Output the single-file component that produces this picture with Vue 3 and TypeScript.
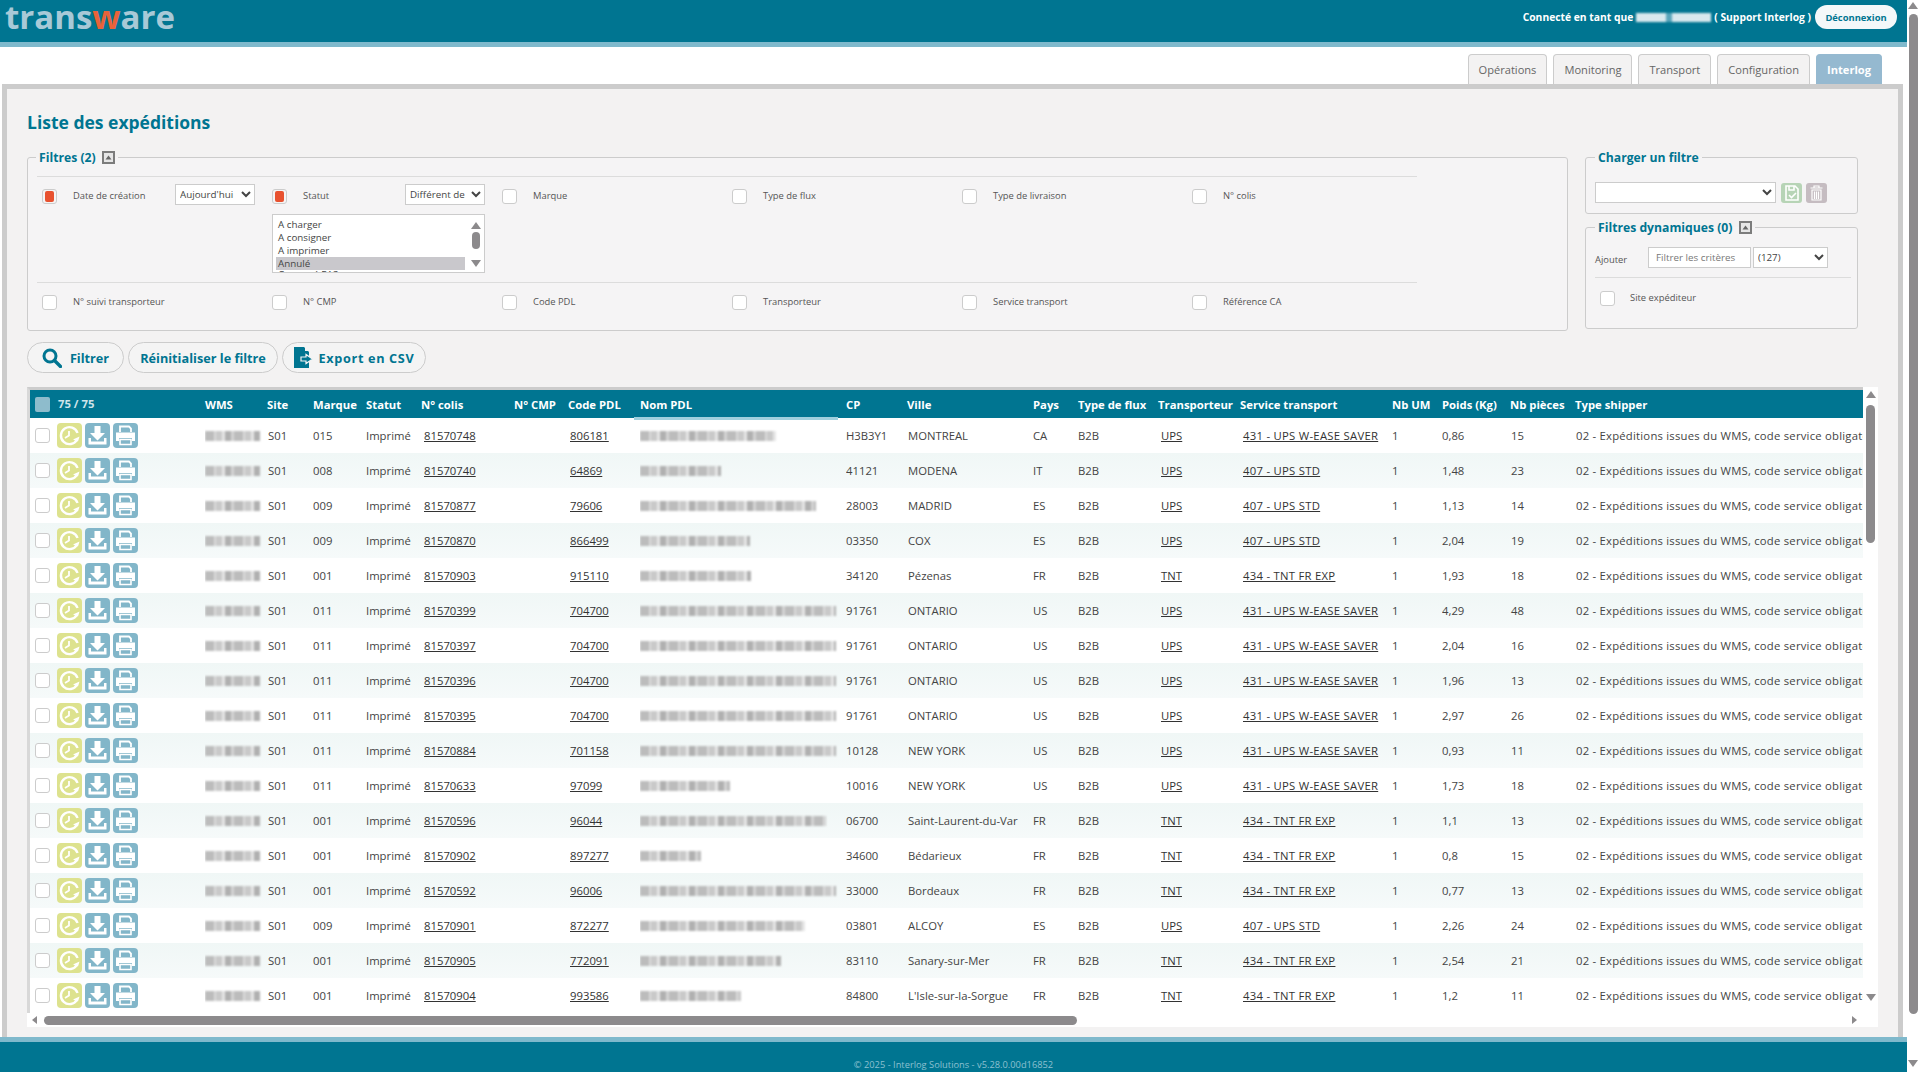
<script setup lang="ts">
interface Row { m: string; c: string; p: string; w: number; cp: string; v: string; y: string; t: string; s: string; kg: string; n: string }
const S431 = '431 - UPS W-EASE SAVER'
const S407 = '407 - UPS STD'
const S434 = '434 - TNT FR EXP'
const rows: Row[] = [
  { m: '015', c: '81570748', p: '806181', w: 136, cp: 'H3B3Y1', v: 'MONTREAL', y: 'CA', t: 'UPS', s: S431, kg: '0,86', n: '15' },
  { m: '008', c: '81570740', p: '64869', w: 81, cp: '41121', v: 'MODENA', y: 'IT', t: 'UPS', s: S407, kg: '1,48', n: '23' },
  { m: '009', c: '81570877', p: '79606', w: 176, cp: '28003', v: 'MADRID', y: 'ES', t: 'UPS', s: S407, kg: '1,13', n: '14' },
  { m: '009', c: '81570870', p: '866499', w: 110, cp: '03350', v: 'COX', y: 'ES', t: 'UPS', s: S407, kg: '2,04', n: '19' },
  { m: '001', c: '81570903', p: '915110', w: 111, cp: '34120', v: 'Pézenas', y: 'FR', t: 'TNT', s: S434, kg: '1,93', n: '18' },
  { m: '011', c: '81570399', p: '704700', w: 196, cp: '91761', v: 'ONTARIO', y: 'US', t: 'UPS', s: S431, kg: '4,29', n: '48' },
  { m: '011', c: '81570397', p: '704700', w: 196, cp: '91761', v: 'ONTARIO', y: 'US', t: 'UPS', s: S431, kg: '2,04', n: '16' },
  { m: '011', c: '81570396', p: '704700', w: 196, cp: '91761', v: 'ONTARIO', y: 'US', t: 'UPS', s: S431, kg: '1,96', n: '13' },
  { m: '011', c: '81570395', p: '704700', w: 196, cp: '91761', v: 'ONTARIO', y: 'US', t: 'UPS', s: S431, kg: '2,97', n: '26' },
  { m: '011', c: '81570884', p: '701158', w: 196, cp: '10128', v: 'NEW YORK', y: 'US', t: 'UPS', s: S431, kg: '0,93', n: '11' },
  { m: '011', c: '81570633', p: '97099', w: 90, cp: '10016', v: 'NEW YORK', y: 'US', t: 'UPS', s: S431, kg: '1,73', n: '18' },
  { m: '001', c: '81570596', p: '96044', w: 186, cp: '06700', v: 'Saint-Laurent-du-Var', y: 'FR', t: 'TNT', s: S434, kg: '1,1', n: '13' },
  { m: '001', c: '81570902', p: '897277', w: 61, cp: '34600', v: 'Bédarieux', y: 'FR', t: 'TNT', s: S434, kg: '0,8', n: '15' },
  { m: '001', c: '81570592', p: '96006', w: 196, cp: '33000', v: 'Bordeaux', y: 'FR', t: 'TNT', s: S434, kg: '0,77', n: '13' },
  { m: '009', c: '81570901', p: '872277', w: 165, cp: '03801', v: 'ALCOY', y: 'ES', t: 'UPS', s: S407, kg: '2,26', n: '24' },
  { m: '001', c: '81570905', p: '772091', w: 141, cp: '83110', v: 'Sanary-sur-Mer', y: 'FR', t: 'TNT', s: S434, kg: '2,54', n: '21' },
  { m: '001', c: '81570904', p: '993586', w: 101, cp: '84800', v: "L'Isle-sur-la-Sorgue", y: 'FR', t: 'TNT', s: S434, kg: '1,2', n: '11' },
]
const cols = [175, 62, 46, 53, 55, 93, 54, 72, 206, 61, 126, 45, 80, 82, 152, 50, 68, 65, 425]
const heads = ['WMS', 'Site', 'Marque', 'Statut', 'N° colis', 'N° CMP', 'Code PDL', 'Nom PDL', 'CP', 'Ville', 'Pays', 'Type de flux', 'Transporteur', 'Service transport', 'Nb UM', 'Poids (Kg)', 'Nb pièces', 'Type shipper']
const row1b = ['Marque', 'Type de flux', 'Type de livraison', 'N° colis']
const row2 = ['N° suivi transporteur', 'N° CMP', 'Code PDL', 'Transporteur', 'Service transport', 'Référence CA']
const tabs = ['Opérations', 'Monitoring', 'Transport', 'Configuration']
const shipper = '02 - Expéditions issues du WMS, code service obligatoire'
</script>

<template>
  <div class="root">
    <div class="page">
      <header class="top">
        <div class="logo">trans<span class="w">w</span>are</div>
        <div class="user">
          <span>Connecté en tant que</span>
          <i class="hide"></i>
          <span>( Support Interlog )</span>
          <button class="logout">Déconnexion</button>
        </div>
      </header>
      <nav class="tabs">
        <a v-for="t in tabs" :key="t" class="tab">{{ t }}</a>
        <a class="tab on">Interlog</a>
      </nav>
      <main class="panel">
        <h1>Liste des expéditions</h1>
        <div class="filters">
          <fieldset class="fs main">
            <legend>Filtres (2) <svg class="fold" viewBox="0 0 13 13"><rect width="13" height="13" fill="#7c7c7c"/><rect x="2" y="2" width="9" height="9" fill="#e6e6e6"/><path d="M3.5 8.5 6.5 4.5 9.5 8.5Z" fill="#666"/></svg></legend>
            <div class="grid r1">
              <div class="cell">
                <span class="ck red"><b></b></span><label>Date de création</label>
                <select class="sel"><option>Aujourd'hui</option></select>
              </div>
              <div class="cell wrap">
                <span class="ck red"><b></b></span><label>Statut</label>
                <select class="sel"><option>Différent de</option></select>
                <div class="list">
                  <div class="opts">
                    <div>A charger</div>
                    <div>A consigner</div>
                    <div>A imprimer</div>
                    <div class="sl">Annulé</div>
                    <div class="cut">Constaté EAS</div>
                  </div>
                  <div class="mini">
                    <i class="up"></i>
                    <em></em>
                    <i class="dn"></i>
                  </div>
                </div>
              </div>
              <div v-for="l in row1b" :key="l" class="cell"><span class="ck"></span><label>{{ l }}</label></div>
            </div>
            <div class="grid r2">
              <div v-for="l in row2" :key="l" class="cell"><span class="ck"></span><label>{{ l }}</label></div>
            </div>
          </fieldset>
          <div class="side">
            <fieldset class="fs load">
              <legend>Charger un filtre</legend>
              <div class="loadrow">
                <select class="sel big"><option></option></select>
                <span class="ib g"><svg viewBox="0 0 21 20"><path d="M5 3h9l3 3v11H5Z" fill="none" stroke="#fff" stroke-width="1.6"/><path d="M8 3v4h5V3M8 12l2.500 2.500L15 10" fill="none" stroke="#fff" stroke-width="1.6"/></svg></span>
                <span class="ib t"><svg viewBox="0 0 21 20"><path d="M4.500 5h12M8 5V3h5v2M6 7h9v10H6ZM8.500 8.500V16M10.500 8.500V16M12.500 8.500V16" fill="none" stroke="#fff" stroke-width="1.200"/></svg></span>
              </div>
            </fieldset>
            <fieldset class="fs dyn">
              <legend>Filtres dynamiques (0) <svg class="fold" viewBox="0 0 13 13"><rect width="13" height="13" fill="#7c7c7c"/><rect x="2" y="2" width="9" height="9" fill="#e6e6e6"/><path d="M3.5 8.5 6.5 4.5 9.5 8.5Z" fill="#666"/></svg></legend>
              <div class="addrow">
                <label>Ajouter</label>
                <input class="inp" placeholder="Filtrer les critères" />
                <select class="sel cnt"><option>(127)</option></select>
              </div>
              <div class="dynrow"><span class="ck"></span><label>Site expéditeur</label></div>
            </fieldset>
          </div>
        </div>
        <div class="btns">
          <button class="btn b1">
            <svg width="20" height="20" viewBox="0 0 20 20"><circle cx="8" cy="8" r="6" fill="none" stroke="#007591" stroke-width="3"/><path d="M12.500 12.500 18.500 18.500" stroke="#007591" stroke-width="3.400" stroke-linecap="round"/></svg>
            Filtrer
          </button>
          <button class="btn b2">Réinitialiser le filtre</button>
          <button class="btn b3">
            <svg width="20" height="21" viewBox="0 0 20 21"><path d="M0 0h10l5 5v16H0Z" fill="#007591"/><path d="M11 0v4h4Z" fill="#f4f4f4"/><path d="M7 10h5V7.500L18.500 12 12 16.500V14H7Z" fill="#007591" stroke="#f4f4f4" stroke-width="1.200"/></svg>
            Export en CSV
          </button>
        </div>
        <section class="tbox">
          <div class="view">
            <table>
              <colgroup><col v-for="(c, i) in cols" :key="i" :style="{ width: c + 'px' }" /></colgroup>
              <thead>
                <tr>
                  <th><div class="count"><span class="hck"></span><span class="num">75 / 75</span></div></th>
                  <th v-for="h in heads" :key="h" :class="{ sorted: h === 'Nom PDL' }">{{ h }}</th>
                </tr>
              </thead>
              <tbody>
                <tr v-for="r in rows" :key="r.c + r.kg">
                  <td>
                    <div class="acts">
                      <span class="ck white"></span>
                      <span class="a y"><svg viewBox="0 0 25 25"><path d="M20 16.500A8.500 8.500 0 1 1 20.500 10" fill="none" stroke="#fff" stroke-width="2.400"/><path d="M21 18.500 16 16.500 22.500 13.500Z" fill="#fff"/><path d="M12 8v4.500L8 15" fill="none" stroke="#fff" stroke-width="1.800"/></svg></span>
                      <span class="a b"><svg viewBox="0 0 25 25"><path d="M9.500 3h6v7h4.500L12.500 17.500 5 10h4.500Z" fill="#fff"/><path d="M3.500 15v6.500h18V15h-2.500v3.500h-13V15Z" fill="#fff"/></svg></span>
                      <span class="a b"><svg viewBox="0 0 25 25"><path d="M7 9V3.500h9l2 2V9" fill="none" stroke="#fff" stroke-width="1.800"/><path d="M3 9.500h19v8.500h-3v-3H6v3H3Z" fill="#fff"/><path d="M7 16.500h11v5H7Z" fill="none" stroke="#fff" stroke-width="1.600"/></svg></span>
                    </div>
                  </td>
                  <td><i class="hide wms"></i></td>
                  <td class="p1">S01</td>
                  <td>{{ r.m }}</td>
                  <td>Imprimé</td>
                  <td class="p3"><u>{{ r.c }}</u></td>
                  <td></td>
                  <td class="p2"><u>{{ r.p }}</u></td>
                  <td><i class="hide" :style="{ width: r.w + 'px' }"></i></td>
                  <td>{{ r.cp }}</td>
                  <td class="p1">{{ r.v }}</td>
                  <td>{{ r.y }}</td>
                  <td>B2B</td>
                  <td class="p3"><u>{{ r.t }}</u></td>
                  <td class="p3 wide"><u>{{ r.s }}</u></td>
                  <td>1</td>
                  <td>{{ r.kg }}</td>
                  <td class="p1">{{ r.n }}</td>
                  <td class="p1 wide2">{{ shipper }}</td>
                </tr>
              </tbody>
            </table>
          </div>
          <div class="vs">
            <i class="up"></i>
            <em></em>
            <i class="dn"></i>
          </div>
          <div class="hs">
            <i class="lf"></i>
            <em></em>
            <i class="rt"></i>
          </div>
        </section>
      </main>
      <footer class="foot">© 2025 - Interlog Solutions - v5.28.0.00d16852</footer>
    </div>
    <aside class="pagebar">
      <i class="up"></i>
      <em></em>
      <i class="dn"></i>
    </aside>
  </div>
</template>

<style>
html, body { margin: 0; height: 100%; overflow: hidden; background: #fff; }
</style>

<style scoped>
.root { display: flex; width: 1919px; height: 1072px; font-family: "Open Sans", "Liberation Sans", sans-serif; color: #444; overflow: hidden; }
.page { width: 1907px; display: flex; flex-direction: column; }
.pagebar { width: 12px; display: flex; flex-direction: column; align-items: center; padding-top: 2px; box-sizing: border-box; }
.pagebar em { display: block; width: 9px; height: 1000px; margin-top: 5px; border-radius: 5px; background: #8c8a8c; }
.pagebar .dn { margin-top: 46px; }
i.up { display: block; width: 0; height: 0; border: 5px solid transparent; border-top: 0; border-bottom: 7px solid #8c8a8c; }
i.dn { display: block; width: 0; height: 0; border: 5px solid transparent; border-bottom: 0; border-top: 7px solid #8c8a8c; }
i.lf { display: block; width: 0; height: 0; border: 4px solid transparent; border-left: 0; border-right: 5px solid #8c8a8c; }
i.rt { display: block; width: 0; height: 0; border: 4px solid transparent; border-right: 0; border-left: 5px solid #8c8a8c; }

.top { height: 42px; flex: none; background: #007591; border-bottom: 5px solid #7fb9cc; display: flex; justify-content: space-between; align-items: flex-start; }
.logo { font-size: 33px; font-weight: 700; line-height: 33px; margin: 0 0 0 5px; color: #a8c9d7; }
.logo .w { color: #e8633a; }
.user { display: flex; align-items: center; gap: 3px; height: 34px; padding-right: 10px; font-size: 10.3px; font-weight: 700; color: #fff; }
.user .hide { width: 75px; height: 9px; background: repeating-linear-gradient(90deg, #d8e8ee 0 30px, #5aa5bb 30px 36px, #d8e8ee 36px 75px); }
.logout { margin-left: 1px; width: 82px; height: 24px; border: 0; border-radius: 12px; background: #f4f8f9; color: #007591; font: 700 9.4px "Open Sans", sans-serif; padding: 0; }

.tabs { height: 37px; flex: none; display: flex; justify-content: flex-end; align-items: flex-end; gap: 6px; padding-right: 25px; }
.tab { height: 30px; box-sizing: border-box; padding: 0 10px; display: flex; align-items: center; border: 1px solid #ccc; border-bottom: 0; border-radius: 4px 4px 0 0; background: #f3f2f2; font-size: 11.1px; color: #666; }
.tab.on { background: #95b9d0; border-color: #95b9d0; color: #fff; font-weight: 700; }

.panel { flex: 1; min-height: 0; margin: 0 4px 0 2px; border: 5px solid #ccc; border-bottom: 0; background: #f3f2f2; padding: 20px 20px 0; }
h1 { margin: 0 0 14px; font-size: 17.5px; line-height: 26px; font-weight: 700; color: #007591; }

.filters { display: flex; gap: 17px; align-items: flex-start; }
.fs { margin: 0; border: 1px solid #ccc; border-radius: 3px; min-width: 0; box-sizing: border-box; background: #f5f4f5; }
legend { font-size: 12.2px; line-height: 16px; font-weight: 700; color: #007591; padding: 1px 3px 0; }
.fold { width: 13px; height: 13px; vertical-align: -2px; margin-left: 3px; }
.fs.main { width: 1541px; height: 182px; padding: 10px 0 0 9px; }
.fs.main legend { margin-left: -1px; }
.grid { display: grid; grid-template-columns: repeat(6, 230px); width: 1380px; border-top: 1px solid #dcdcdc; }
.r1 { height: 105px; }
.r2 { height: 48px; }
.cell { display: flex; flex-wrap: nowrap; align-items: flex-start; padding: 12px 12px 0 5px; box-sizing: border-box; }
.cell.wrap { flex-wrap: wrap; align-content: flex-start; }
.ck { flex: none; display: inline-flex; align-items: center; justify-content: center; width: 15px; height: 15px; box-sizing: border-box; border: 1px solid #ccc; border-radius: 3px; background: #fff; }
.ck b { width: 9px; height: 11px; border-radius: 2px; background: #e8512f; }
.ck.red { background: #f5f4f5; }
label { font-size: 9.4px; line-height: 14px; color: #555; }
.cell label { margin-left: 16px; }
.sel { height: 21px; margin: -5px 0 0 auto; width: 80px; box-sizing: border-box; background: #fff; border: 1px solid #ccc; border-radius: 0; font: 9.8px "Open Sans", sans-serif; color: #444; padding: 0; }
.list { flex: none; width: 213px; height: 59px; margin-top: 9px; box-sizing: border-box; border: 1px solid #ccc; background: #fff; display: flex; overflow: hidden; padding: 3px 3px 0; }
.opts { width: 190px; font-size: 9.8px; line-height: 13px; color: #444; }
.opts div { padding-left: 2px; height: 13px; }
.opts .sl { background: #c9c8cc; }
.opts .cut { margin-top: -2px; }
.mini { margin-left: 5px; width: 11px; display: flex; flex-direction: column; align-items: center; padding-top: 4px; }
.mini em { display: block; width: 8px; height: 17px; border-radius: 4px; background: #8c8a8c; margin-top: 3px; }
.mini .dn { margin-top: 11px; }

.side { width: 273px; display: flex; flex-direction: column; gap: 5px; }
.fs.load { height: 65px; padding: 0 0 0 9px; }
.fs.load legend, .fs.dyn legend { margin-left: 0; }
.loadrow { display: flex; align-items: center; gap: 4px; padding-top: 16px; }
.sel.big { width: 181px; margin: 0; }
.ib { width: 21px; height: 20px; border-radius: 3px; }
.ib svg { display: block; }
.ib.g { background: #b7d4b6; margin-left: 1px; }
.ib.t { background: #c5bcc1; }
.fs.dyn { height: 110px; padding: 0 0 0 9px; }
.addrow { display: flex; align-items: center; margin-top: 11px; height: 21px; width: 252px; }
.addrow label { width: 53px; flex: none; padding-top: 4px; }
.inp { width: 103px; height: 21px; box-sizing: border-box; border: 1px solid #ccc; background: #fff; font: 9.8px "Open Sans", sans-serif; padding: 0 0 0 7px; outline: none; }
.inp::placeholder { color: #777; opacity: 1; }
.sel.cnt { width: 75px; margin: 0 0 0 2px; }
.dynrow { width: 251px; border-top: 1px solid #dcdcdc; margin-top: 9px; padding: 13px 0 0 5px; display: flex; align-items: flex-start; }
.dynrow label { margin-left: 15px; }

.btns { display: flex; gap: 4px; margin: 11px 0 14px; height: 31px; align-items: center; }
.btn { height: 31px; box-sizing: border-box; border: 1px solid #ccc; border-radius: 16px; background: #f4f4f4; color: #007591; font: 700 12.7px "Open Sans", sans-serif; display: flex; align-items: center; padding: 0; justify-content: center; }
.b1 { width: 97px; gap: 8px; }
.b2 { width: 150px; }
.b3 { width: 144px; gap: 5px; letter-spacing: .65px; }

.tbox { width: 1851px; height: 640px; background: #fff; display: grid; grid-template-columns: 1836px 15px; grid-template-rows: 626px 14px; }
.view { overflow: hidden; border-top: 3px solid #ccc; border-left: 3px solid #d8d8d8; box-sizing: border-box; }
table { border-collapse: collapse; table-layout: fixed; width: 1970px; font-size: 11.3px; color: #444; }
th { height: 28px; padding: 0; background: #007591; color: #fff; font-size: 11.3px; font-weight: 700; text-align: left; white-space: nowrap; position: relative; }
th.sorted::after { content: ""; position: absolute; left: -6px; width: 204px; bottom: -2px; height: 3px; background: #9fd0de; }
td { height: 35px; padding: 0; white-space: nowrap; overflow: hidden; }
tbody tr:nth-child(even) td { background: linear-gradient(180deg, #f0f7f6, #f6fafa); }
u { color: #333; }
.p1 { padding-left: 1px; }
.p2 { padding-left: 2px; }
.p3 { padding-left: 3px; }
.wide { letter-spacing: .27px; }
.wide2 { letter-spacing: .22px; }
.count { display: flex; align-items: center; padding-left: 5px; }
.hck { width: 15px; height: 15px; border-radius: 2px; background: #8ebccc; margin-right: 8px; }
.num { color: #cfe4ea; margin-top: -2px; }
.acts { display: flex; align-items: center; padding: 0 0 1px 5px; gap: 3px; }
.ck.white { margin-right: 4px; }
.a { width: 25px; height: 25px; border-radius: 4px; display: block; }
.a svg { display: block; }
.a.y { background: #dde28e; }
.a.b { background: #82b6c9; }
.hide { display: block; height: 10px; filter: blur(1px); background: repeating-linear-gradient(90deg, #bcbcbc 0 9px, #dadada 9px 11px, #c9c9c9 11px 17px, #e6e6e6 17px 20px, #b0b0b0 20px 26px, #d4d4d4 26px 29px); }
.hide.wms { width: 55px; }
.vs { grid-row: 1 / 3; grid-column: 2; display: flex; flex-direction: column; align-items: center; padding-top: 4px; box-sizing: border-box; }
.vs em { display: block; width: 9px; height: 138px; border-radius: 5px; background: #8c8a8c; margin-top: 7px; }
.vs .dn { margin-top: 451px; }
.hs { display: flex; align-items: center; padding: 0 6px 0 5px; box-sizing: border-box; }
.hs em { display: block; width: 1033px; height: 9px; border-radius: 5px; background: #8c8a8c; margin-left: 7px; }
.hs .rt { margin-left: auto; }

.foot { flex: none; height: 14px; background: #007591; border-top: 5px solid #7fb9cc; color: #8cc0d0; font-size: 9.3px; text-align: center; line-height: 14px; padding-top: 16px; }
</style>
